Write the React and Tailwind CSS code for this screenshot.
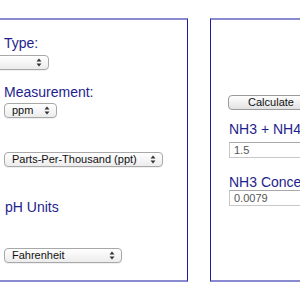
// Ammonia calculator form, two bordered panels
const label = "text-[14px] leading-[16px] text-[#1e1e8c]";

function Arrows() {
  return (
    <svg width="6" height="9" viewBox="0 0 6 9" className="shrink-0">
      <path d="M3 0.5 L5.5 3.5 H0.5 Z" fill="#333" />
      <path d="M3 8.5 L5.5 5.5 H0.5 Z" fill="#333" />
    </svg>
  );
}

function Select({ text, className }) {
  return (
    <div
      className={
        "flex items-center justify-between h-[15px] pl-[7px] pr-[6px] rounded-[4px] border border-[#a8a8a8] bg-gradient-to-b from-white to-[#ececec] text-[11px] leading-none text-[#111] shadow-[0_1px_0_rgba(0,0,0,0.06)] " +
        className
      }
    >
      <span>{text}</span>
      <Arrows />
    </div>
  );
}

export default function App() {
  return (
    <div className="w-[300px] h-[300px] overflow-hidden bg-white" style={{ fontFamily: "'Liberation Sans', Arial, sans-serif" }}>
      <div className="flex gap-[22px] pt-[18px] -ml-[12px]">
        <div className="w-[200px] h-[264px] shrink-0 border-x border-x-[#1a1a9a] border-y-2 border-y-[#8a8ad0] pl-[15px] flex flex-col">
          <div className={label + " mt-[15px]"}>Type:</div>
          <Select text="" className="w-[60px] -ml-[15px] mt-[4px]" />
          <div className={label + " mt-[14px]"}>Measurement:</div>
          <Select text="ppm" className="w-[53px] mt-[3px]" />
          <Select text="Parts-Per-Thousand (ppt)" className="w-[159px] mt-[34px]" />
          <div className={label + " mt-[32px] ml-[1px]"}>pH Units</div>
          <Select text="Fahrenheit" className="w-[118px] mt-[33px]" />
        </div>
        <div className="w-[120px] h-[264px] shrink-0 border-x border-x-[#1a1a9a] border-y-2 border-y-[#8a8ad0] pl-[17px] flex flex-col">
          <button className="w-[86px] h-[15px] mt-[75px] rounded-[4px] border border-[#9a9a9a] bg-gradient-to-b from-white to-[#e2e2e2] text-[11px] leading-none text-[#111] text-center">
            Calculate
          </button>
          <div className={label + " mt-[11px] ml-[1px] whitespace-nowrap"}>NH3 + NH4</div>
          <div className="h-[16px] mt-[5px] ml-[1px] border border-[#c8c8c8] border-t-[#a8a8a8] text-[11px] leading-[14px] text-[#555] pl-[4px]">1.5</div>
          <div className={label + " mt-[16px] ml-[1px] whitespace-nowrap"}>NH3 Concentration</div>
          <div className="h-[16px] ml-[1px] border border-[#c8c8c8] border-t-[#a8a8a8] text-[11px] leading-[14px] text-[#555] pl-[4px]">0.0079</div>
        </div>
      </div>
    </div>
  );
}
